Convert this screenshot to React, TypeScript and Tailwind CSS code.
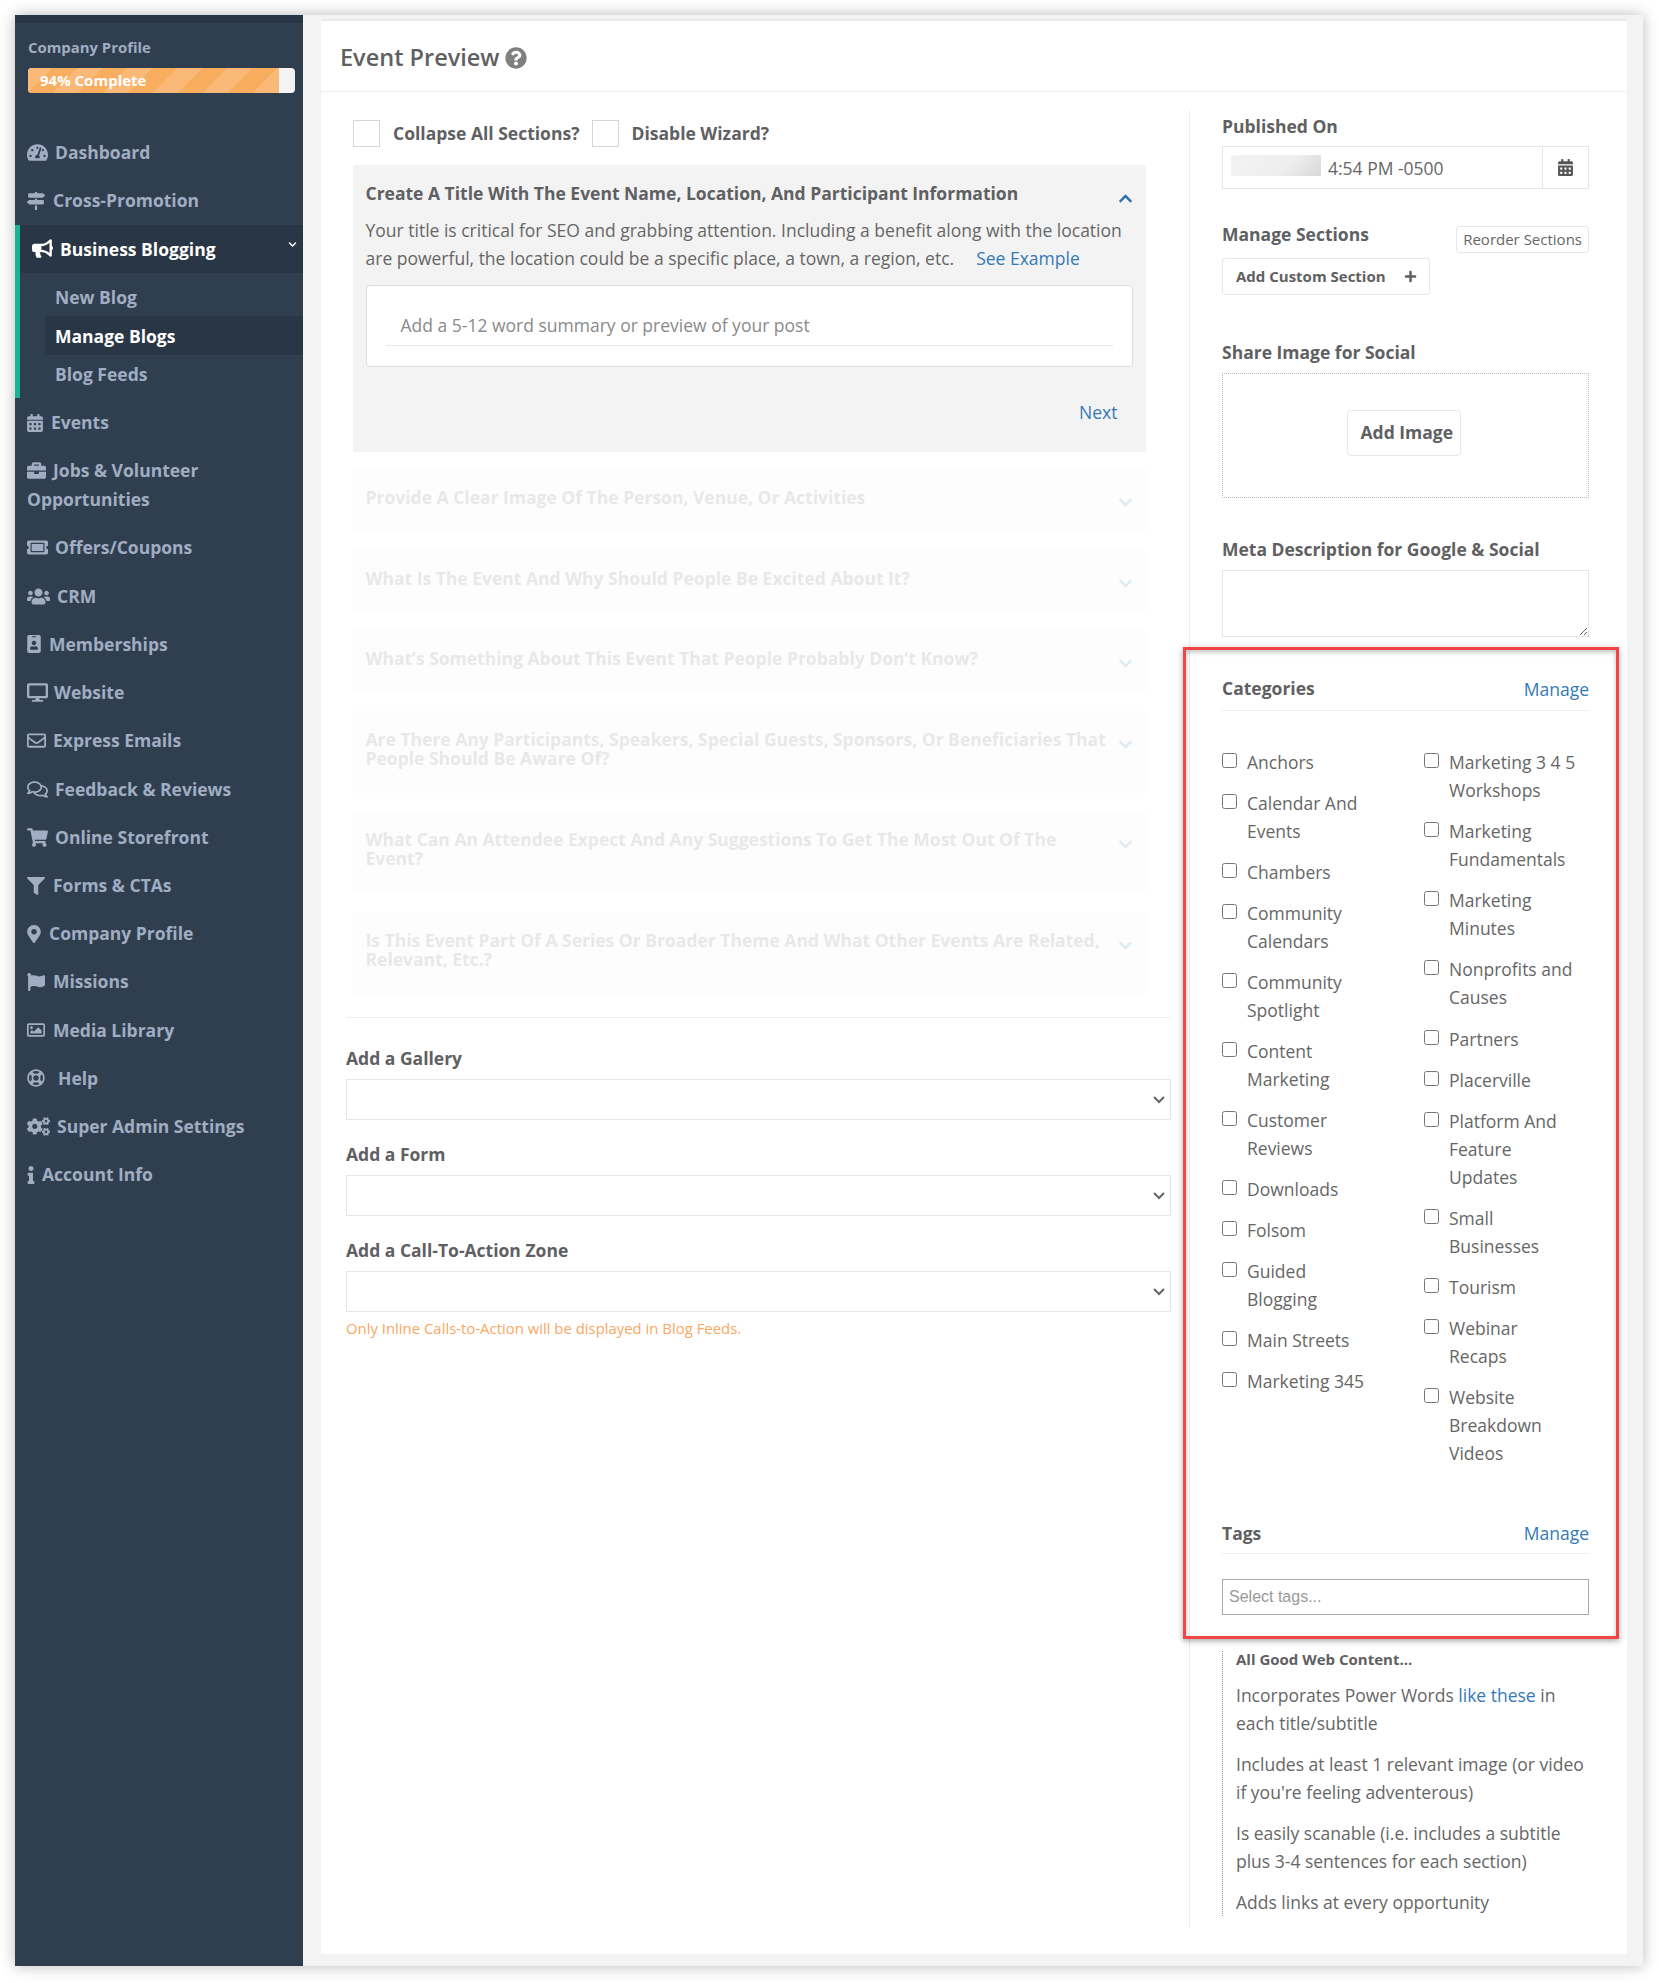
import type { ReactNode } from 'react';
import {
  FaBriefcase,
  FaBullhorn,
  FaCalendarAlt,
  FaChevronDown,
  FaChevronUp,
  FaCogs,
  FaDesktop,
  FaFilter,
  FaFlag,
  FaIdBadge,
  FaInfo,
  FaMapMarkerAlt,
  FaMapSigns,
  FaPlus,
  FaQuestionCircle,
  FaRegComments,
  FaRegEnvelope,
  FaRegImage,
  FaRegLifeRing,
  FaShoppingCart,
  FaTachometerAlt,
  FaTicketAlt,
  FaUsers,
} from 'react-icons/fa';

type NavItem = { label: ReactNode; icon: ReactNode; box: string };

const topNav: NavItem[] = [
  { label: 'Dashboard', icon: <FaTachometerAlt size={21} />, box: 'w-[28px]' },
  { label: 'Cross-Promotion', icon: <FaMapSigns size={18} />, box: 'w-[26px]' },
];

const bottomNav: NavItem[] = [
  { label: 'Events', icon: <FaCalendarAlt size={18} className="-ml-[1px]" />, box: 'w-[24px]' },
  { label: 'Jobs & Volunteer', icon: <FaBriefcase size={19} />, box: 'w-[26px]' },
  { label: 'Offers/Coupons', icon: <FaTicketAlt size={21} />, box: 'w-[28px]' },
  { label: 'CRM', icon: <FaUsers size={23} />, box: 'w-[30px]' },
  { label: 'Memberships', icon: <FaIdBadge size={18} className="-ml-[2px]" />, box: 'w-[22px]' },
  { label: 'Website', icon: <FaDesktop size={21} />, box: 'w-[27px]' },
  { label: 'Express Emails', icon: <FaRegEnvelope size={19} />, box: 'w-[26px]' },
  { label: 'Feedback & Reviews', icon: <FaRegComments size={21} />, box: 'w-[28px]' },
  { label: 'Online Storefront', icon: <FaShoppingCart size={21} />, box: 'w-[28px]' },
  { label: 'Forms & CTAs', icon: <FaFilter size={18} />, box: 'w-[26px]' },
  { label: 'Company Profile', icon: <FaMapMarkerAlt size={18} className="-ml-[2px]" />, box: 'w-[22px]' },
  { label: 'Missions', icon: <FaFlag size={18} />, box: 'w-[26px]' },
  { label: 'Media Library', icon: <FaRegImage size={18} />, box: 'w-[26px]' },
  { label: 'Help', icon: <FaRegLifeRing size={18} />, box: 'w-[31px]' },
  { label: 'Super Admin Settings', icon: <FaCogs size={23} />, box: 'w-[30px]' },
  { label: 'Account Info', icon: <FaInfo size={18} className="-ml-[5px]" />, box: 'w-[15px]' },
];

const fadedSections = [
  'Provide A Clear Image Of The Person, Venue, Or Activities',
  'What Is The Event And Why Should People Be Excited About It?',
  'What’s Something About This Event That People Probably Don’t Know?',
  'Are There Any Participants, Speakers, Special Guests, Sponsors, Or Beneficiaries That People Should Be Aware Of?',
  'What Can An Attendee Expect And Any Suggestions To Get The Most Out Of The Event?',
  'Is This Event Part Of A Series Or Broader Theme And What Other Events Are Related, Relevant, Etc.?',
];

const categoriesLeft = [
  'Anchors',
  'Calendar And Events',
  'Chambers',
  'Community Calendars',
  'Community Spotlight',
  'Content Marketing',
  'Customer Reviews',
  'Downloads',
  'Folsom',
  'Guided Blogging',
  'Main Streets',
  'Marketing 345',
];

const categoriesRight = [
  'Marketing 3 4 5 Workshops',
  'Marketing Fundamentals',
  'Marketing Minutes',
  'Nonprofits and Causes',
  'Partners',
  'Placerville',
  'Platform And Feature Updates',
  'Small Businesses',
  'Tourism',
  'Webinar Recaps',
  'Website Breakdown Videos',
];

function SideLink({ item }: { item: NavItem }) {
  return (
    <div className="px-[12px] py-[9.62px] leading-[29px]">
      <div className="flex items-center">
        <span className={`${item.box} flex shrink-0 items-center`}>{item.icon}</span>
        <span>{item.label}</span>
      </div>
      {item.label === 'Jobs & Volunteer' && <div>Opportunities</div>}
    </div>
  );
}

function Sidebar() {
  return (
    <aside className="w-[288px] shrink-0 bg-[#303f50] text-[17.5px] font-bold text-[#a0adc2]">
      <div className="h-[8px] bg-[#283645]" />
      <div className="h-[105.5px] pl-[13px] pr-[8px] pt-[14px]">
        <div className="text-[14.9px] leading-[20px]">Company Profile</div>
        <div className="mt-[11px] flex h-[25px] overflow-hidden rounded-[4px] bg-[#f3f3f3]">
          <div className="h-full w-[251px] bg-[#f9ad5f] bg-[linear-gradient(135deg,rgba(255,255,255,.15)_25%,transparent_25%,transparent_50%,rgba(255,255,255,.15)_50%,rgba(255,255,255,.15)_75%,transparent_75%)] bg-[length:50px_50px] pl-[12px] text-[15px] font-bold leading-[25px] text-white">
            94% Complete
          </div>
        </div>
      </div>
      {topNav.map((item) => (
        <SideLink key={item.box + 'top'} item={item} />
      ))}
      <div className="border-l-[5px] border-[#1ab394]">
        <div className="relative flex h-[48px] items-center bg-[#283645] pl-[12px] text-white">
          <FaBullhorn size={21} className="mr-[7px]" />
          <span>Business Blogging</span>
          <FaChevronDown size={9} className="absolute right-[6px] top-[15px]" />
        </div>
        <div className="pb-[5px] pl-[25px] pt-[5px]">
          <div className="flex h-[38.5px] items-center pl-[10px]">New Blog</div>
          <div className="flex h-[38.5px] items-center bg-[#283645] pl-[10px] text-white">Manage Blogs</div>
          <div className="flex h-[38.5px] items-center pl-[10px]">Blog Feeds</div>
        </div>
      </div>
      {bottomNav.map((item) => (
        <SideLink key={String(item.label)} item={item} />
      ))}
    </aside>
  );
}

function SelectField({ label }: { label: string }) {
  return (
    <div className="mb-[22px]">
      <div className="text-[17.5px] font-bold leading-[24px] text-[#5f6062]">{label}</div>
      <div className="relative mt-[9px]">
        <select className="block h-[41px] w-full appearance-none border border-[#e5e6e7] bg-white text-[#555]" />
        <svg width="12" height="8" viewBox="0 0 12 8" className="absolute right-[6px] top-[17px]">
          <polyline points="1,1 6,6 11,1" fill="none" stroke="#666" strokeWidth="2" />
        </svg>
      </div>
    </div>
  );
}

function CheckList({ items, rowClass }: { items: string[]; rowClass: string }) {
  return (
    <div>
      {items.map((name) => (
        <label key={name} className={`${rowClass} flex items-start leading-[28px]`}>
          <input type="checkbox" className="mt-[5px] h-[15px] w-[15px] shrink-0" />
          <span className="w-[141px] pl-[10px]">{name}</span>
        </label>
      ))}
    </div>
  );
}

function LeftColumn() {
  return (
    <div className="w-[868px] shrink-0 pl-[25px] pr-[18px] pt-[28px]">
      <div className="ml-[7px] flex h-[27px] items-center text-[17.5px] font-bold text-[#5f6062]">
        <input type="checkbox" className="h-[27px] w-[27px] appearance-none border border-[#d6d6d6] bg-white" />
        <span className="ml-[13px]">Collapse All Sections?</span>
        <input type="checkbox" className="ml-[12px] h-[27px] w-[27px] appearance-none border border-[#d6d6d6] bg-white" />
        <span className="ml-[13px]">Disable Wizard?</span>
      </div>

      <div className="ml-[7px] mt-[18px] h-[287px] w-[793px] bg-[#f3f3f3] px-[12.5px] pt-[19px]">
        <div className="flex items-start justify-between">
          <div className="text-[17.5px] font-bold leading-[19px] text-[#5f6062]">
            Create A Title With The Event Name, Location, And Participant Information
          </div>
          <FaChevronUp size={15} className="mr-[1px] mt-[7px] text-[#2f6fb0]" />
        </div>
        <p className="mt-[9.5px] text-[17.5px] leading-[28px] text-[#666]">
          Your title is critical for SEO and grabbing attention. Including a benefit along with the location are
          powerful, the location could be a specific place, a town, a region, etc.
          <a className="ml-[22px] text-[#337ab7]">See Example</a>
        </p>
        <div className="mt-[13.5px] h-[82px] w-[767px] rounded-[4px] border border-[#dddddd] bg-white px-[19px] pt-[24.5px]">
          <div className="border-b border-[#e5e6e7] pb-[6.5px] pl-[15px] text-[17.5px] leading-[28px] text-[#8a8a8a]">
            Add a 5-12 word summary or preview of your post
          </div>
        </div>
        <div className="mt-[30.5px] pr-[16px] text-right text-[17.5px] leading-[28px] text-[#337ab7]">Next</div>
      </div>

      <div className="ml-[7px] mt-[17px] flex w-[793px] flex-col opacity-[.14]">
        {fadedSections.map((title) => (
          <div
            key={title}
            className={`mb-[18.5px] flex items-start justify-between bg-[#f3f3f3] px-[12.5px] pt-[19px] ${
              title.length > 70 ? 'h-[82px]' : 'h-[62px]'
            }`}
          >
            <div className="w-[742px] text-[17.5px] font-bold leading-[19px] text-[#5f6062]">{title}</div>
            <FaChevronDown size={15} className="mr-[1px] mt-[7px] shrink-0 text-[#2f6fb0]" />
          </div>
        ))}
      </div>

      <div className="mt-[5px] border-t border-[#eeeeee] pt-[28px]">
        <SelectField label="Add a Gallery" />
        <SelectField label="Add a Form" />
        <SelectField label="Add a Call-To-Action Zone" />
        <div className="-mt-[16px] text-[14.9px] leading-[20px] text-[#f9a763]">
          Only Inline Calls-to-Action will be displayed in Blog Feeds.
        </div>
      </div>
    </div>
  );
}

function RightColumn() {
  const label = 'text-[17.5px] font-bold leading-[25px] text-[#5f6062]';
  return (
    <div className="mt-[18px] h-[1818px] flex-1 border-l-[1.5px] border-[#eeeeee] pl-[32px] pr-[38px] pt-[3.5px] text-[17.5px] text-[#666]">
      <div className={label}>Published On</div>
      <div className="relative mt-[7.5px] flex h-[43px] border border-[#e5e6e7]">
        <div className="flex-1 pl-[105px] leading-[43px]">4:54 PM -0500</div>
        <div className="absolute left-[8px] top-[8px] h-[21px] w-[90px] bg-[linear-gradient(135deg,#f3f3f3,#eeeeee_60%,#d8d8d8)]" />
        <div className="flex w-[46px] items-center justify-center border-l border-[#e5e6e7]">
          <FaCalendarAlt size={17} className="text-[#555]" />
        </div>
      </div>

      <div className="mt-[33px] flex justify-between">
        <div className={label}>Manage Sections</div>
        <div className="mt-[4px] flex h-[27px] items-center rounded-[3px] border border-[#e7e7e7] px-[6px] text-[15px] text-[#666]">
          Reorder Sections
        </div>
      </div>
      <div className="mt-[5px] flex h-[37px] w-[208px] items-center justify-between rounded-[3px] border border-[#e7e7e7] pl-[13px] pr-[12px] text-[15px] font-bold text-[#5f6062]">
        Add Custom Section
        <FaPlus size={13} />
      </div>

      <div className={`${label} mt-[45px]`}>Share Image for Social</div>
      <div className="mt-[8px] flex h-[125px] items-center justify-center border border-dotted border-[#bbbbbb]">
        <div className="mb-[6px] mr-[4px] flex h-[46px] w-[114px] items-center rounded-[4px] border border-[#e7e7e7] pl-[13px] text-[17.5px] font-bold text-[#5f6062]">
          Add Image
        </div>
      </div>

      <div className={`${label} mt-[39px]`}>Meta Description for Google &amp; Social</div>
      <textarea className="mt-[8px] block h-[67px] w-full border border-[#e5e6e7]" />

      <div className="mt-[39px] flex items-start justify-between border-b border-[#eeeeee] pb-[9px]">
        <div className={label}>Categories</div>
        <a className="mt-[1px] leading-[24px] text-[#337ab7]">Manage</a>
      </div>
      <div className="mt-[37px] grid grid-cols-[202px_1fr]">
        <CheckList items={categoriesLeft} rowClass="mb-[13px]" />
        <CheckList items={categoriesRight} rowClass="mb-[13.15px]" />
      </div>

      <div className="mt-[40px] flex justify-between border-b border-[#eeeeee] pb-[8px] leading-[24px]">
        <div className="text-[17.5px] font-bold text-[#5f6062]">Tags</div>
        <a className="text-[#337ab7]">Manage</a>
      </div>
      <div className="mt-[25px] flex h-[36px] items-center border border-[#aaaaaa] pl-[6px] font-['Liberation_Sans',sans-serif] text-[16px] text-[#999999]">
        Select tags...
      </div>

      <div className="mt-[36px] border-l border-dotted border-[#999999] pl-[13px]">
        <div className="text-[15px] font-bold leading-[16px] text-[#5f6062]">All Good Web Content...</div>
        <p className="mt-[14px] leading-[28px]">
          Incorporates Power Words <a className="text-[#337ab7]">like these</a> in each title/subtitle
        </p>
        <p className="mt-[13px] leading-[28px]">Includes at least 1 relevant image (or video if you're feeling adventerous)</p>
        <p className="mt-[13px] leading-[28px]">Is easily scanable (i.e. includes a subtitle plus 3-4 sentences for each section)</p>
        <p className="mt-[13px] leading-[28px]">Adds links at every opportunity</p>
      </div>
    </div>
  );
}

export default function App() {
  return (
    <div className="relative h-[1983px] w-[1659px] overflow-hidden bg-white pl-[15px] pt-[15px] font-['Open_Sans',sans-serif]">
      <div className="flex h-[1951px] w-[1628px] shadow-[0_0_14px_rgba(0,0,0,.28)]">
        <Sidebar />
        <main className="flex-1 bg-[#f3f3f3] pb-[12px] pl-[18px] pr-[16px] pt-[4px]">
          <div className="h-full border-t-[2px] border-[#e7eaec] bg-white">
            <div className="flex h-[71px] items-center border-b border-[#eeeeee] pl-[19px] pt-[3px] text-[23.5px] font-semibold text-[#5f6062]">
              Event Preview
              <FaQuestionCircle size={22} className="ml-[6px] text-[#808080]" />
            </div>
            <div className="flex">
              <LeftColumn />
              <RightColumn />
            </div>
          </div>
        </main>
      </div>
      {/* red annotation box drawn over the page */}
      <div className="pointer-events-none absolute left-[1183px] top-[647px] h-[992px] w-[436px] border-[3px] border-[#f44545] shadow-[0_2px_6px_rgba(0,0,0,.35),inset_0_2px_5px_rgba(0,0,0,.25)]" />
    </div>
  );
}
